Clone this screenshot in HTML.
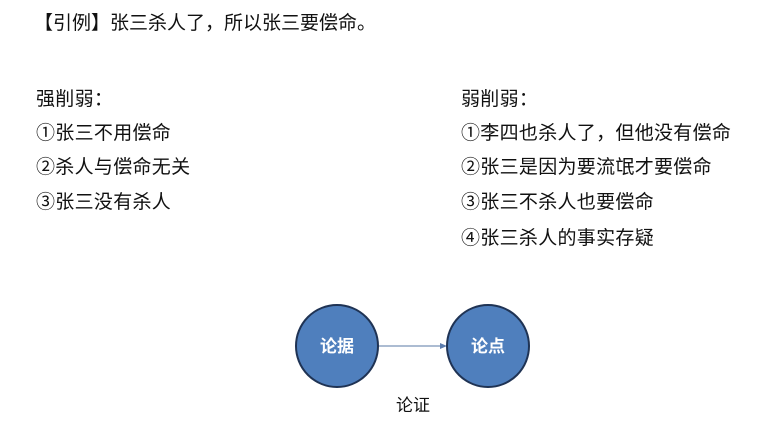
<!DOCTYPE html>
<html><head><meta charset="utf-8"><style>
body{margin:0;width:781px;height:432px;background:#fff;position:relative;overflow:hidden;font-family:"Liberation Sans","Noto Sans CJK SC",sans-serif;color:#111;font-size:19px}
.t{position:absolute;white-space:nowrap;line-height:20px;letter-spacing:0.3px}
</style></head><body>
<div class="t" style="left:34px;top:14px;letter-spacing:0">【引例】张三杀人了，所以张三要偿命。</div>
<div class="t" style="left:36px;top:90px">强削弱：</div>
<div class="t" style="left:36px;top:124px">①张三不用偿命</div>
<div class="t" style="left:36px;top:158px">②杀人与偿命无关</div>
<div class="t" style="left:36px;top:193px">③张三没有杀人</div>
<div class="t" style="left:461px;top:90px">弱削弱：</div>
<div class="t" style="left:461px;top:124px">①李四也杀人了，但他没有偿命</div>
<div class="t" style="left:461px;top:158px">②张三是因为要流氓才要偿命</div>
<div class="t" style="left:461px;top:193px">③张三不杀人也要偿命</div>
<div class="t" style="left:461px;top:229px">④张三杀人的事实存疑</div>
<svg style="position:absolute;left:0;top:0" width="781" height="432">
<line x1="379" y1="346" x2="442" y2="346" stroke="#7a93b8" stroke-width="1.2"/>
<polygon points="447,346 440,343 440,349" fill="#5b7cae"/>
<circle cx="337" cy="346" r="41" fill="#4f7fbd" stroke="#1f3354" stroke-width="2"/>
<circle cx="488" cy="346" r="41" fill="#4f7fbd" stroke="#1f3354" stroke-width="2"/>
<text x="337" y="352" text-anchor="middle" fill="#fff" font-weight="bold" font-size="17" font-family="Noto Sans CJK SC,sans-serif">论据</text>
<text x="488" y="352" text-anchor="middle" fill="#fff" font-weight="bold" font-size="17" font-family="Noto Sans CJK SC,sans-serif">论点</text>
<text x="413" y="411" text-anchor="middle" fill="#111" font-size="17" font-family="Noto Sans CJK SC,sans-serif">论证</text>
</svg>
</body></html>
